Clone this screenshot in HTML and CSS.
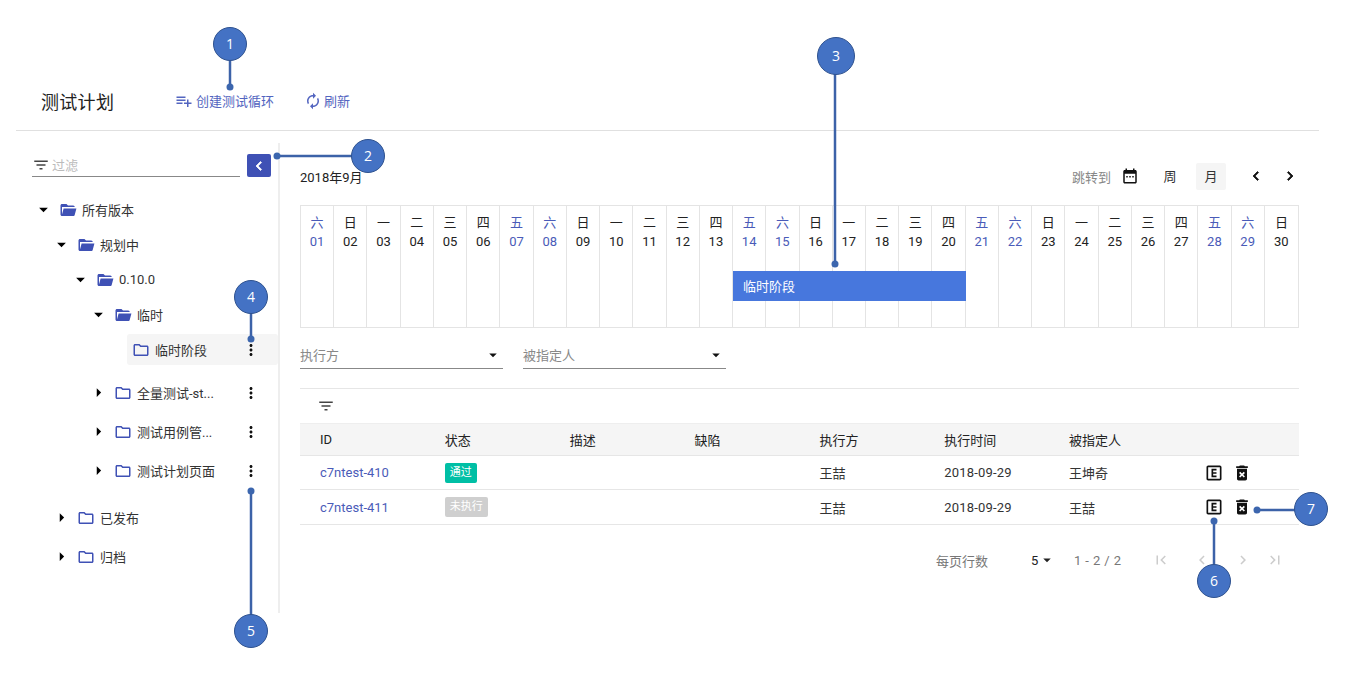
FILE: index.html
```html
<!DOCTYPE html>
<html lang="zh-CN">
<head>
    <meta charset="UTF-8">
    <title>测试计划</title>
    <link rel="stylesheet" href="styles.css">
</head>
<body>
    <svg class="sprite" width="0" height="0">
        <symbol id="i-add-list" viewBox="0 0 24 24"><path d="M14 10H2v2h12v-2zm0-4H2v2h12V6zm4 8v-4h-2v4h-4v2h4v4h2v-4h4v-2h-4zM2 16h8v-2H2v2z"/></symbol>
        <symbol id="i-refresh" viewBox="0 0 24 24"><path d="M12 6v3l4-4-4-4v3c-4.42 0-8 3.58-8 8 0 1.57.46 3.03 1.24 4.26L6.7 14.8c-.45-.83-.7-1.79-.7-2.8 0-3.31 2.69-6 6-6zm6.76 1.74L17.3 9.2c.44.84.7 1.79.7 2.8 0 3.31-2.69 6-6 6v-3l-4 4 4 4v-3c4.42 0 8-3.58 8-8 0-1.57-.46-3.03-1.24-4.26z"/></symbol>
        <symbol id="i-filter" viewBox="0 0 24 24"><path d="M10 18h4v-2h-4v2zM3 6v2h18V6H3zm3 7h12v-2H6v2z"/></symbol>
        <symbol id="i-open" viewBox="0 0 24 24"><path d="M19 20H4c-1.11 0-2-.9-2-2V6c0-1.11.89-2 2-2h6l2 2h7a2 2 0 0 1 2 2H4v10l2.14-8h17.07l-2.28 8.5c-.23.87-1.01 1.5-1.93 1.5z"/></symbol>
        <symbol id="i-folder" viewBox="0 0 24 24"><path d="M9.17 6l2 2H20v10H4V6h5.17M10 4H4c-1.1 0-1.99.9-1.99 2L2 18c0 1.1.9 2 2 2h16c1.1 0 2-.9 2-2V8c0-1.1-.9-2-2-2h-8l-2-2z"/></symbol>
        <symbol id="i-more" viewBox="0 0 24 24"><path d="M12 8c1.1 0 2-.9 2-2s-.9-2-2-2-2 .9-2 2 .9 2 2 2zm0 2c-1.1 0-2 .9-2 2s.9 2 2 2 2-.9 2-2-.9-2-2-2zm0 6c-1.1 0-2 .9-2 2s.9 2 2 2 2-.9 2-2-.9-2-2-2z"/></symbol>
        <symbol id="i-prev" viewBox="0 0 24 24"><path d="M15.41 7.41L14 6l-6 6 6 6 1.41-1.41L10.83 12z"/></symbol>
        <symbol id="i-next" viewBox="0 0 24 24"><path d="M10 6L8.59 7.41 13.17 12l-4.58 4.59L10 18l6-6z"/></symbol>
        <symbol id="i-down" viewBox="0 0 24 24"><path d="M7 10l5 5 5-5z"/></symbol>
        <symbol id="i-right" viewBox="0 0 24 24"><path d="M10 17l5-5-5-5v10z"/></symbol>
        <symbol id="i-first" viewBox="0 0 24 24"><path d="M18.41 16.59L13.82 12l4.59-4.59L17 6l-6 6 6 6zM6 6h2v12H6z"/></symbol>
        <symbol id="i-last" viewBox="0 0 24 24"><path d="M5.59 7.41L10.18 12l-4.59 4.59L7 18l6-6-6-6zM16 6h2v12h-2z"/></symbol>
        <symbol id="i-date" viewBox="0 0 24 24"><path d="M9 12H7v2h2v-2zm4 0h-2v2h2v-2zm4 0h-2v2h2v-2zm2-8h-1V2h-2v2H8V2H6v2H5c-1.11 0-1.99.9-1.99 2L3 20c0 1.1.89 2 2 2h14c1.1 0 2-.9 2-2V6c0-1.1-.9-2-2-2zm0 16H5V9h14v11z"/></symbol>
        <symbol id="i-edit" viewBox="0 0 24 24"><path d="M19 3H5c-1.11 0-2 .9-2 2v14c0 1.1.89 2 2 2h14c1.1 0 2-.9 2-2V5c0-1.1-.9-2-2-2zm0 16H5V5h14v14zm-4-4h-4v-2h4v-2h-4V9h4V7H9v10h6z"/></symbol>
        <symbol id="i-delete" viewBox="0 0 24 24"><path d="M6 19c0 1.1.9 2 2 2h8c1.1 0 2-.9 2-2V7H6v12zm2.46-7.12l1.41-1.41L12 12.59l2.12-2.12 1.41 1.41L13.41 14l2.12 2.12-1.41 1.41L12 15.41l-2.12 2.12-1.41-1.41L10.59 14l-2.13-2.12zM15.5 4l-1-1h-5l-1 1H5v2h14V4z"/></symbol>
    </svg>

    <div class="page">
        <header class="page-header">
            <h1>测试计划</h1>
            <a class="head-btn btn-create"><svg class="icon-18"><use href="#i-add-list"/></svg>创建测试循环</a>
            <a class="head-btn btn-refresh"><svg class="icon-18"><use href="#i-refresh"/></svg>刷新</a>
        </header>

        <div class="content">
            <aside class="sidebar">
                <div class="tree-search">
                    <div class="search-field">
                        <svg class="icon-18 icon-grey"><use href="#i-filter"/></svg>
                        <span>过滤</span>
                    </div>
                    <button class="collapse-btn"><svg class="icon-18"><use href="#i-prev"/></svg></button>
                </div>

                <div class="tree">
                    <div class="tree-row lv-0"><svg class="arrow"><use href="#i-down"/></svg><svg class="folder"><use href="#i-open"/></svg><span class="name">所有版本</span></div>
                    <div class="tree-row lv-1"><svg class="arrow"><use href="#i-down"/></svg><svg class="folder"><use href="#i-open"/></svg><span class="name">规划中</span></div>
                    <div class="tree-row lv-2"><svg class="arrow"><use href="#i-down"/></svg><svg class="folder"><use href="#i-open"/></svg><span class="name">0.10.0</span></div>
                    <div class="tree-row lv-3"><svg class="arrow"><use href="#i-down"/></svg><svg class="folder"><use href="#i-open"/></svg><span class="name">临时</span></div>
                    <div class="tree-row lv-4 selected"><svg class="folder"><use href="#i-folder"/></svg><span class="name">临时阶段</span><svg class="more"><use href="#i-more"/></svg></div>
                    <div class="tree-row lv-3 gap-after-selected"><svg class="arrow"><use href="#i-right"/></svg><svg class="folder"><use href="#i-folder"/></svg><span class="name">全量测试-st...</span><svg class="more"><use href="#i-more"/></svg></div>
                    <div class="tree-row lv-3 gap-m"><svg class="arrow"><use href="#i-right"/></svg><svg class="folder"><use href="#i-folder"/></svg><span class="name">测试用例管...</span><svg class="more"><use href="#i-more"/></svg></div>
                    <div class="tree-row lv-3 gap-m"><svg class="arrow"><use href="#i-right"/></svg><svg class="folder"><use href="#i-folder"/></svg><span class="name">测试计划页面</span><svg class="more"><use href="#i-more"/></svg></div>
                    <div class="tree-row lv-1 gap-l"><svg class="arrow"><use href="#i-right"/></svg><svg class="folder"><use href="#i-folder"/></svg><span class="name">已发布</span></div>
                    <div class="tree-row lv-1 gap-m"><svg class="arrow"><use href="#i-right"/></svg><svg class="folder"><use href="#i-folder"/></svg><span class="name">归档</span></div>
                </div>
            </aside>

            <main class="main">
                <div class="cal-head">
                    <span class="cal-title">2018年9月</span>
                    <div class="cal-tools">
                        <span class="jump-label">跳转到</span>
                        <svg class="icon-18 icon-date"><use href="#i-date"/></svg>
                        <span class="view-btn view-week">周</span>
                        <span class="view-btn active">月</span>
                        <svg class="icon-18 nav-prev"><use href="#i-prev"/></svg>
                        <svg class="icon-18 nav-next"><use href="#i-next"/></svg>
                    </div>
                </div>

                <div class="calendar">
                    <div class="day off">六<br>01</div>
                    <div class="day">日<br>02</div>
                    <div class="day">一<br>03</div>
                    <div class="day">二<br>04</div>
                    <div class="day">三<br>05</div>
                    <div class="day">四<br>06</div>
                    <div class="day off">五<br>07</div>
                    <div class="day off">六<br>08</div>
                    <div class="day">日<br>09</div>
                    <div class="day">一<br>10</div>
                    <div class="day">二<br>11</div>
                    <div class="day">三<br>12</div>
                    <div class="day">四<br>13</div>
                    <div class="day off">五<br>14</div>
                    <div class="day off">六<br>15</div>
                    <div class="day">日<br>16</div>
                    <div class="day">一<br>17</div>
                    <div class="day">二<br>18</div>
                    <div class="day">三<br>19</div>
                    <div class="day">四<br>20</div>
                    <div class="day off">五<br>21</div>
                    <div class="day off">六<br>22</div>
                    <div class="day">日<br>23</div>
                    <div class="day">一<br>24</div>
                    <div class="day">二<br>25</div>
                    <div class="day">三<br>26</div>
                    <div class="day">四<br>27</div>
                    <div class="day off">五<br>28</div>
                    <div class="day off">六<br>29</div>
                    <div class="day">日<br>30</div>
                    <div class="stage-bar">临时阶段</div>
                </div>

                <div class="filters">
                    <div class="select"><span>执行方</span><svg class="icon-18"><use href="#i-down"/></svg></div>
                    <div class="select"><span>被指定人</span><svg class="icon-18"><use href="#i-down"/></svg></div>
                </div>

                <div class="table">
                    <div class="table-tools"><svg class="icon-18 icon-grey"><use href="#i-filter"/></svg></div>
                    <div class="t-row t-head">
                        <span>ID</span><span>状态</span><span>描述</span><span>缺陷</span><span>执行方</span><span>执行时间</span><span>被指定人</span><span></span>
                    </div>
                    <div class="t-row">
                        <a class="link">c7ntest-410</a><span><em class="tag tag-pass">通过</em></span><span></span><span></span><span>王喆</span><span class="num">2018-09-29</span><span>王坤奇</span>
                        <span class="actions"><svg class="icon-20"><use href="#i-edit"/></svg><svg class="icon-20"><use href="#i-delete"/></svg></span>
                    </div>
                    <div class="t-row">
                        <a class="link">c7ntest-411</a><span><em class="tag tag-todo">未执行</em></span><span></span><span></span><span>王喆</span><span class="num">2018-09-29</span><span>王喆</span>
                        <span class="actions"><svg class="icon-20"><use href="#i-edit"/></svg><svg class="icon-20"><use href="#i-delete"/></svg></span>
                    </div>
                </div>

                <div class="pager">
                    <span class="pager-label">每页行数</span>
                    <span class="pager-size">5<svg class="icon-18"><use href="#i-down"/></svg></span>
                    <span class="pager-range">1 - 2 / 2</span>
                    <span class="pager-btns">
                        <svg class="icon-18"><use href="#i-first"/></svg>
                        <svg class="icon-18"><use href="#i-prev"/></svg>
                        <svg class="icon-18"><use href="#i-next"/></svg>
                        <svg class="icon-18 pager-last"><use href="#i-last"/></svg>
                    </span>
                </div>
            </main>
        </div>
    </div>

    <!-- numbered callouts drawn over the screenshot -->
    <svg class="callouts" width="1353" height="686">
        <g class="lines">
            <path d="M230 60V87"/>
            <path d="M352 156H277"/>
            <path d="M835 72V264"/>
            <path d="M251 313V339"/>
            <path d="M251 615V491"/>
            <path d="M1214 565V521"/>
            <path d="M1295 510H1257"/>
        </g>
        <g class="dots">
            <circle cx="230" cy="87" r="3.5"/>
            <circle cx="277" cy="156" r="3.5"/>
            <circle cx="835" cy="264" r="3.5"/>
            <circle cx="251" cy="339" r="3.5"/>
            <circle cx="251" cy="491" r="3.5"/>
            <circle cx="1214" cy="521" r="3.5"/>
            <circle cx="1257" cy="510" r="3.5"/>
        </g>
        <g class="badges">
            <circle cx="230" cy="44" r="16.5"/><text x="230" y="49">1</text>
            <circle cx="368" cy="156" r="16.5"/><text x="368" y="161">2</text>
            <circle cx="836" cy="56" r="18.5"/><text x="836" y="61">3</text>
            <circle cx="251" cy="297" r="16.5"/><text x="251" y="302">4</text>
            <circle cx="251" cy="631" r="16.5"/><text x="251" y="636">5</text>
            <circle cx="1214" cy="581" r="16.5"/><text x="1214" y="586">6</text>
            <circle cx="1311" cy="509" r="16.5"/><text x="1311" y="514">7</text>
        </g>
    </svg>
</body>
</html>
```

FILE: styles.css
```css
* {
    box-sizing: border-box;
}

body {
    margin: 0;
    position: relative;
    width: 1353px;
    height: 686px;
    overflow: hidden;
    background: #fff;
    color: #222;
    font-family: Roboto, "Noto Sans CJK SC", sans-serif;
    font-size: 13px;
}

.sprite {
    position: absolute;
}

svg {
    fill: currentColor;
    flex: none;
}

.icon-18 {
    width: 18px;
    height: 18px;
}

.icon-20 {
    width: 20px;
    height: 20px;
}

.icon-grey {
    color: #444;
}

.page {
    padding: 0 34px 0 16px;
}

/* header */
.page-header {
    display: flex;
    align-items: center;
    height: 131px;
    padding: 71px 0 0 25px;
    border-bottom: 1px solid #e0e0e0;
}

.page-header h1 {
    margin: 0;
    width: 134px;
    font-size: 18px;
    font-weight: 400;
    letter-spacing: .3px;
    color: #222;
}

.head-btn {
    display: flex;
    align-items: center;
    gap: 3px;
    color: #5365c0;
}

.btn-create {
    width: 129px;
}

.btn-refresh {
    gap: 2px;
}

/* sidebar */
.content {
    display: flex;
    margin-top: 12px;
}

.sidebar {
    width: 264px;
    height: 470px;
    border-right: 2px solid #eee;
}

.tree-search {
    display: flex;
    align-items: flex-end;
    gap: 7px;
    padding: 11px 0 0 16px;
}

.search-field {
    display: flex;
    align-items: center;
    gap: 2px;
    width: 208px;
    height: 22px;
    padding-bottom: 2px;
    border-bottom: 1px solid #888;
    color: #bbb;
}

.collapse-btn {
    display: flex;
    align-items: center;
    justify-content: center;
    width: 24px;
    height: 23px;
    padding: 0;
    border: 0;
    border-radius: 2px;
    background: #3f51b5;
    color: #fff;
}

.collapse-btn svg,
.nav-prev,
.nav-next {
    stroke: currentColor;
    stroke-width: 1px;
}

.tree {
    margin-top: 17px;
}

.tree-row {
    display: flex;
    align-items: center;
    height: 31px;
    margin-bottom: 4px;
    color: #333;
}

.lv-0 { padding-left: 18px; }
.lv-1 { padding-left: 36px; }
.lv-2 { padding-left: 55px; }
.lv-3 { padding-left: 73px; }

.lv-4 {
    margin-left: 111px;
    padding-left: 5px;
}

.selected {
    background: #f5f5f5;
    border-radius: 3px;
}

.gap-after-selected {
    margin-top: 12px;
    margin-bottom: 8px;
}

.gap-m {
    margin-bottom: 8px;
}

.gap-l {
    margin-top: 16px;
    margin-bottom: 8px;
}

.arrow {
    width: 21px;
    height: 21px;
    margin: 0 5px 0 -1px;
    color: #000;
}

.folder {
    width: 18px;
    height: 18px;
    margin-right: 5px;
    color: #3f51b5;
}

.name {
    flex: 1;
    white-space: nowrap;
}

.more {
    width: 18px;
    height: 18px;
    margin-right: 18px;
    color: #111;
}

/* main */
.main {
    flex: 1;
    padding: 0 20px;
}

.cal-head {
    display: flex;
    justify-content: space-between;
    align-items: center;
    height: 62px;
    padding-top: 4px;
}

.cal-tools {
    display: flex;
    align-items: center;
    color: #333;
}

.jump-label {
    color: #888;
    margin-right: 10px;
}

.icon-date {
    color: #111;
    margin-right: 16px;
}

.view-btn {
    width: 30px;
    height: 27px;
    line-height: 27px;
    text-align: center;
    border-radius: 2px;
}

.view-week {
    margin-right: 11px;
}

.view-btn.active {
    background: #f5f5f5;
    margin-right: 21px;
}

.nav-prev {
    margin-right: 16px;
    color: #111;
}

.nav-next {
    color: #111;
}

.calendar {
    position: relative;
    display: grid;
    grid-template-columns: repeat(30, minmax(0, 1fr));
    height: 123px;
    border: 1px solid #e4e4e4;
}

.day {
    padding-top: 7px;
    border-right: 1px solid #e4e4e4;
    text-align: center;
    line-height: 19px;
    color: #222;
}

.day:nth-child(30) {
    border-right: 0;
}

.day.off {
    color: #4a5bb8;
}

/* spans 14th to 20th of 30 days */
.stage-bar {
    position: absolute;
    top: 65px;
    left: calc(100% * 13 / 30);
    width: calc(100% * 7 / 30);
    height: 30px;
    padding-left: 10px;
    line-height: 31px;
    background: #4777dd;
    color: #fff;
}

.filters {
    display: flex;
    gap: 20px;
    margin-top: 13px;
}

.select {
    display: flex;
    align-items: center;
    justify-content: space-between;
    width: 203px;
    height: 28px;
    border-bottom: 1px solid #888;
    color: #888;
}

.select svg {
    color: #111;
    margin-right: 1px;
}

.table {
    margin-top: 19px;
    border-top: 1px solid #e6e6e6;
}

.table-tools {
    height: 34px;
    padding: 8px 0 0 17px;
}

.t-row {
    display: grid;
    grid-template-columns: repeat(6, 124.85px) 135px 1fr;
    align-items: center;
    height: 34px;
    padding-left: 20px;
    border-bottom: 1px solid #e6e6e6;
    color: #333;
}

.t-row + .t-row + .t-row {
    height: 35px;
}

.t-head {
    height: 33px;
    background: #f5f5f5;
    border-top: 1px solid #eee;
    color: #222;
}

.link {
    color: #4a5bb8;
}

.num {
    letter-spacing: .2px;
}

.tag {
    display: inline-block;
    height: 20px;
    padding: 0 5px;
    border-radius: 2px;
    font-style: normal;
    font-size: 11px;
    line-height: 20px;
    color: #fff;
}

.tag-pass {
    background: #00bfa5;
}

.tag-todo {
    background: #cfcfcf;
}

.actions {
    display: flex;
    gap: 8px;
    color: #111;
}

.pager {
    display: flex;
    align-items: center;
    height: 70px;
    padding-left: 636px;
    color: #777;
}

.pager-label {
    width: 95px;
}

.pager-size {
    display: flex;
    align-items: center;
    width: 43px;
    color: #222;
}

.pager-range {
    width: 78px;
    letter-spacing: .4px;
}

.pager-btns {
    display: flex;
    gap: 23px;
    color: #ccc;
}

.pager-last {
    margin-left: -9px;
}

/* callouts */
.callouts {
    position: absolute;
    left: 0;
    top: 0;
    pointer-events: none;
}

.lines path {
    fill: none;
    stroke: #3c62a8;
    stroke-width: 2.5;
}

.dots circle {
    fill: #3c66ae;
}

.badges circle {
    fill: #4472c4;
    stroke: #2f528f;
    stroke-width: 1;
}

.badges text {
    fill: #fff;
    font-family: "Open Sans", sans-serif;
    font-size: 14px;
    text-anchor: middle;
}
```
